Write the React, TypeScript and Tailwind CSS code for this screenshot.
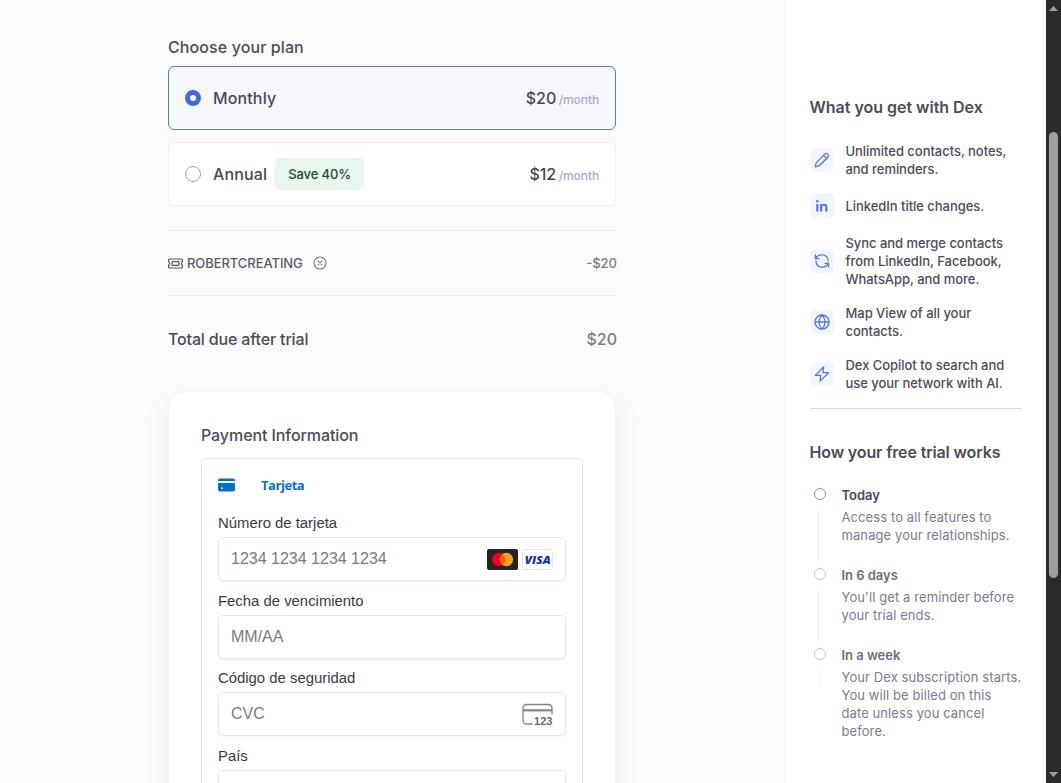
import React from "react";

const Stroke = ({ children, size = 16 }: { children: React.ReactNode; size?: number }) => (
  <svg width={size} height={size} viewBox="0 0 24 24" fill="none" stroke="currentColor" strokeWidth="1.900" strokeLinecap="round" strokeLinejoin="round">
    {children}
  </svg>
);

const PencilIcon = () => (
  <Stroke>
    <path d="M1.800 22.200l1.600-6.200L16.200 3.200a2.900 2.900 0 0 1 4.100 0l.5.500a2.900 2.900 0 0 1 0 4.100L8 20.600z" />
    <path d="M14.200 5.200l4.600 4.600" />
  </Stroke>
);

const LinkedInIcon = () => (
  <svg width="12" height="12" viewBox="0 0 12 12" fill="currentColor">
    <circle cx="1.300" cy="1.300" r="1.300" />
    <path d="M0.200 4h2.200v7.600H.2zM4 4h2.100v1c.4-.7 1.200-1.200 2.400-1.200 2.300 0 3 1.400 3 3.600v4.200H9.200V7.900c0-1.200-.2-2.100-1.400-2.100S6.200 6.700 6.200 7.900v3.700H4z" />
  </svg>
);

const SyncIcon = () => (
  <Stroke>
    <path d="M2 3v5.500h5.500" />
    <path d="M2.500 8.500C4 4.500 7.500 2.800 12 2.800c5.500 0 9 3.700 9 9.200" />
    <path d="M22 21v-5.500h-5.500" />
    <path d="M21.500 15.500c-1.500 4-5 5.700-9.500 5.700-5.500 0-9-3.700-9-9.200" />
  </Stroke>
);

const GlobeIcon = () => (
  <Stroke>
    <circle cx="12" cy="12" r="10.500" />
    <path d="M1.500 12h21M12 1.500c3 3 4.500 6.500 4.500 10.500s-1.500 7.500-4.500 10.500c-3-3-4.500-6.500-4.500-10.500S9 4.500 12 1.500z" />
  </Stroke>
);

const BoltIcon = () => (
  <Stroke>
    <path d="M14.500 1.500L2 14h8l-1 8.500L22 10h-8.500z" />
  </Stroke>
);

const TicketIcon = () => (
  <svg width="15" height="11" viewBox="0 0 15 11" fill="none" stroke="currentColor" strokeWidth="1.200">
    <path d="M1.600 1h11.800a1 1 0 0 1 1 1v1.700c-1.300.5-1.300 3.100 0 3.600V9a1 1 0 0 1-1 1H1.600a1 1 0 0 1-1-1V7.300c1.300-.5 1.300-3.100 0-3.600V2a1 1 0 0 1 1-1z" />
    <rect x="4" y="3.600" width="7" height="3.800" rx=".6" />
  </svg>
);

const RemoveIcon = () => (
  <svg width="14" height="14" viewBox="0 0 14 14" fill="none" stroke="currentColor" strokeWidth="1.100" strokeLinecap="round">
    <circle cx="7" cy="7" r="6" />
    <path d="M5.100 5.100l3.800 3.800M8.900 5.100L5.100 8.900" />
  </svg>
);

const CardIcon = () => (
  <svg width="17" height="14" viewBox="0 0 17 14" fill="currentColor">
    <path d="M0 2.500A2 2 0 0 1 2 .5h13a2 2 0 0 1 2 2v.6H0z" />
    <path fillRule="evenodd" d="M0 5h17v6.500a2 2 0 0 1-2 2H2a2 2 0 0 1-2-2zm4 4.300a.9.9 0 1 0 0 1.800.9.900 0 0 0 0-1.800z" />
  </svg>
);

const Mastercard = () => (
  <svg width="31" height="21" viewBox="0 0 31 21">
    <rect width="31" height="21" rx="2" fill="#252525" />
    <circle cx="11.800" cy="10.500" r="6.700" fill="#eb001b" />
    <circle cx="19.400" cy="10.500" r="6.700" fill="#f79e1b" />
    <path d="M15.600 5a6.700 6.700 0 0 1 0 11 6.700 6.700 0 0 1 0-11z" fill="#ff5f00" />
  </svg>
);

const Visa = () => (
  <svg width="31" height="21" viewBox="0 0 31 21">
    <rect x=".5" y=".5" width="30" height="20" rx="2" fill="#fff" stroke="#dfe3ea" />
    <text x="2.700" y="14.500" textLength="26" lengthAdjust="spacingAndGlyphs" fill="#1a2fa0" className="font-['Open_Sans',sans-serif] text-[11px] font-extrabold italic">VISA</text>
  </svg>
);

const CvcIcon = () => (
  <svg width="31" height="23" viewBox="0 0 31 23" fill="none">
    <path d="M10.500 21H4.500A3.500 3.500 0 0 1 1 17.500V5A3.500 3.500 0 0 1 4.500 1.500h22A3.500 3.500 0 0 1 30 5v6.500" stroke="#858585" strokeWidth="1.300" />
    <path d="M1 7.300h29" stroke="#858585" strokeWidth="2.200" />
    <text x="12" y="21.700" textLength="18.500" lengthAdjust="spacingAndGlyphs" fill="#6b6b6b" className="font-['Liberation_Sans',sans-serif] text-[10px] font-bold">123</text>
  </svg>
);

function Plan({ name, price, selected, badge }: { name: string; price: string; selected?: boolean; badge?: string }) {
  return (
    <div className={`flex h-16 items-center rounded-md border px-4 ${selected ? "border-[#5b7bc9] bg-[#f7f8fd]" : "border-[#f0f0f3] bg-white"}`}>
      <span className={`size-4 rounded-full bg-white ${selected ? "border-[5px] border-[#4768db]" : "border border-[#a3a3aa]"}`} />
      <span className="ml-3 text-base font-medium tracking-[0.13px] text-[#484854]">{name}</span>
      {badge && <span className="ml-2 flex h-8 w-[89px] items-center rounded-[5px] bg-[#e8f6ed] pl-[13px] pt-px text-[13px] font-medium tracking-[-0.1px] text-[#1d4a35]">{badge}</span>}
      <span className="ml-auto text-base font-medium text-[#444450]">{price}</span>
      <span className="ml-[2.500px] mt-1 text-xs font-medium tracking-[-0.1px] text-[#a9a9c6]">/month</span>
    </div>
  );
}

function Field({ label, placeholder, children }: { label: string; placeholder?: string; children?: React.ReactNode }) {
  return (
    <div className="mb-[8.500px]">
      <div className="mb-[3px] h-[22px] text-[14.880px] leading-[23px] text-[#3a3a42]">{label}</div>
      <div className="flex h-11 items-center gap-1 rounded-[5px] border border-[#e8e8e8] bg-white px-3 shadow-[0_1px_1px_rgba(0,0,0,0.03),0_3px_6px_rgba(0,0,0,0.02)]">
        <span className="mr-auto text-base text-[#7b7b7f]">{placeholder}</span>
        {children}
      </div>
    </div>
  );
}

function Feature({ icon, children }: { icon: React.ReactNode; children: React.ReactNode }) {
  return (
    <li className="flex items-center">
      <span className="mr-3 flex size-6 shrink-0 items-center justify-center rounded-[5px] bg-[#f2f6fe] text-[#5279e0]">{icon}</span>
      <span className="whitespace-nowrap text-[13px] font-medium leading-[18px] tracking-[-0.04px] text-[#4c4c58]">{children}</span>
    </li>
  );
}

function Step({ title, active, last, children }: { title: string; active?: boolean; last?: boolean; children: React.ReactNode }) {
  return (
    <li className={`flex ${last ? "" : "h-20"}`}>
      <div className="flex w-5 shrink-0 flex-col items-center">
        <span className={`mt-0.5 size-3 shrink-0 rounded-full border ${active ? "border-[#8588e8]" : "border-[#c9c9cd]"}`} />
        <span className={`mt-2.5 w-px ${last ? "h-4 bg-[#f5f5f7]" : "mr-[3px] h-[53px] bg-[#f0f0f2]"}`} />
      </div>
      <div className="ml-3 whitespace-nowrap text-[13px] leading-[18px]">
        <div className={`mb-1 font-semibold tracking-[-0.03px] ${active ? "text-[#484854]" : "text-[#6e6e7c]"}`}>{title}</div>
        <div className="tracking-[0.090px] text-[#7b7b8e]">{children}</div>
      </div>
    </li>
  );
}

export default function App() {
  return (
    <div className="flex h-[783px] w-[1061px] overflow-hidden bg-[#fbfbfb] font-['Inter',sans-serif]">
      <main className="h-full w-[785px] shrink-0 overflow-hidden pl-[168px] pt-[35px]">
        <div className="w-[448px]">
          <h2 className="mb-[7px] text-base font-medium tracking-[0.1px] text-[#4c4c58]">Choose your plan</h2>
          <div className="flex flex-col gap-3">
            <Plan name="Monthly" price="$20" selected />
            <Plan name="Annual" price="$12" badge="Save 40%" />
          </div>
          <div className="-mr-px mt-6 flex h-[66px] items-center border-y border-[#ececee] text-[13px] font-medium">
            <span className="text-[#55555f]"><TicketIcon /></span>
            <span className="ml-1 pt-0.5 tracking-[-0.07px] text-[#5a5a64]">ROBERTCREATING</span>
            <span className="ml-[10px] text-[#7c7c94]"><RemoveIcon /></span>
            <span className="ml-auto pt-0.5 text-[#7b7b86]">-$20</span>
          </div>
          <div className="-mr-px mt-[31px] flex justify-between text-base font-medium text-[#4c4c58]">
            <span className="tracking-[-0.16px]">Total due after trial</span>
            <span className="text-[#7b7b86]">$20</span>
          </div>
          <section className="mt-10 h-[480px] rounded-2xl border border-[#f3f3f4] bg-white px-8 pt-[31px] shadow-[0_16px_32px_rgba(0,0,0,0.07)]">
            <h2 className="mb-[11px] text-base font-medium tracking-[-0.08px] text-[#4c4c58]">Payment Information</h2>
            <div className="h-[400px] rounded-[5px] border border-[#e8e8e8] px-4 pt-4 font-['Liberation_Sans',sans-serif]">
              <div className="mb-[17px] flex h-5 items-center text-[#0570c8]">
                <CardIcon />
                <span className="ml-[26px] font-['Open_Sans',sans-serif] text-[13px] font-bold leading-5 tracking-[-0.450px]">Tarjeta</span>
              </div>
              <Field label="Número de tarjeta" placeholder="1234 1234 1234 1234">
                <Mastercard />
                <Visa />
              </Field>
              <Field label="Fecha de vencimiento" placeholder="MM/AA" />
              <Field label="Código de seguridad" placeholder="CVC">
                <CvcIcon />
              </Field>
              <Field label="País" />
            </div>
          </section>
        </div>
      </main>
      <aside className="h-full w-[261px] shrink-0 border-l border-[#f4f4f5] bg-white pl-[23.500px] pt-[95px]">
        <div className="w-[212.500px]">
          <h2 className="mb-[23px] whitespace-nowrap text-base font-semibold tracking-[-0.02px] text-[#4c4c58]">What you get with Dex</h2>
          <ul className="flex flex-col gap-4 border-b border-[#dadade] pb-4">
            <Feature icon={<PencilIcon />}>Unlimited contacts, notes,<br />and reminders.</Feature>
            <Feature icon={<LinkedInIcon />}>LinkedIn title changes.</Feature>
            <Feature icon={<SyncIcon />}>Sync and merge contacts<br />from LinkedIn, Facebook,<br />WhatsApp, and more.</Feature>
            <Feature icon={<GlobeIcon />}>Map View of all your<br />contacts.</Feature>
            <Feature icon={<BoltIcon />}>Dex Copilot to search and<br />use your network with AI.</Feature>
          </ul>
          <h2 className="mb-[22px] mt-[31px] whitespace-nowrap text-base font-semibold tracking-[-0.14px] text-[#4c4c58]">How your free trial works</h2>
          <ul>
            <Step title="Today" active>Access to all features to<br />manage your relationships.</Step>
            <Step title="In 6 days">You'll get a reminder before<br />your trial ends.</Step>
            <Step title="In a week" last>Your Dex subscription starts.<br />You will be billed on this<br />date unless you cancel<br />before.</Step>
          </ul>
        </div>
      </aside>
      <div className="flex h-full w-[15px] shrink-0 flex-col items-center bg-[#2b2b2b] py-1.5 text-[#a0a0a0]">
        <svg width="9" height="5" viewBox="0 0 9 5" fill="currentColor"><path d="M4.500 0L9 5H0z" /></svg>
        <div className="mb-auto mt-[121px] h-[446px] w-[9px] rounded-full bg-[#9e9e9e]" />
        <svg width="9" height="5" viewBox="0 0 9 5" fill="currentColor"><path d="M0 0h9L4.500 5z" /></svg>
      </div>
    </div>
  );
}
